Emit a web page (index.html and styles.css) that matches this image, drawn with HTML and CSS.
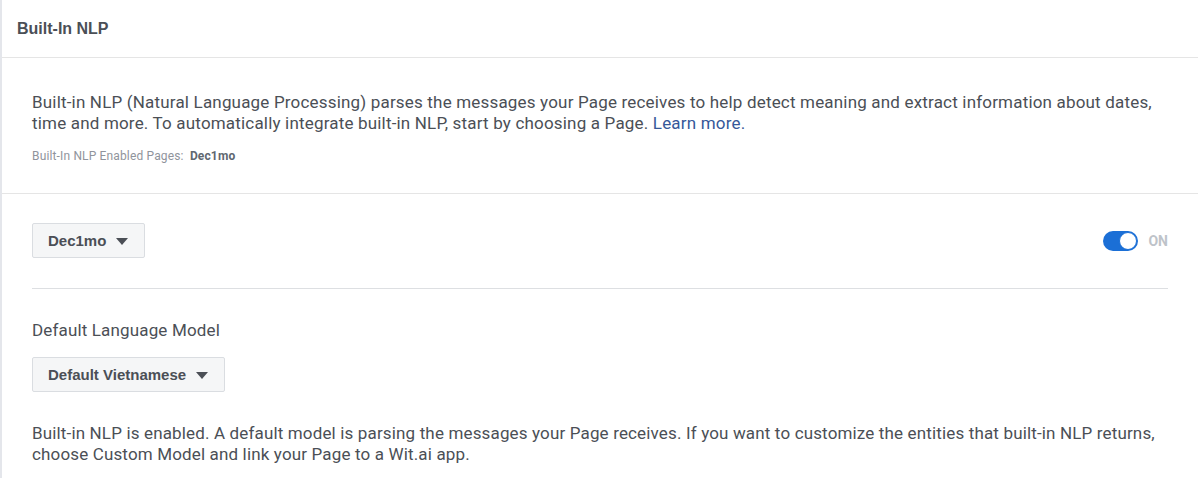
FILE: index.html
```html
<!DOCTYPE html>
<html>
<head>
<meta charset="utf-8">
<link rel="stylesheet" href="styles.css">
</head>
<body>
<div class="panel">
  <div class="header">Built-In NLP</div>
  <div class="intro">
    <p class="desc">Built-in NLP (Natural Language Processing) parses the messages your Page receives to help detect meaning and extract information about dates, time and more. To automatically integrate built-in NLP, start by choosing a Page. <a class="link" href="#">Learn more.</a></p>
    <div class="enabled">Built-In NLP Enabled Pages:&nbsp; <b class="enabled-name">Dec1mo</b></div>
  </div>
  <div class="settings">
    <div class="page-row">
      <button class="dropdown">Dec1mo <span class="caret"></span></button>
      <div class="toggle-wrap">
        <span class="toggle"><span class="knob"></span></span>
        <span class="toggle-label">ON</span>
      </div>
    </div>
    <div class="divider"></div>
    <div class="label">Default Language Model</div>
    <button class="dropdown">Default Vietnamese <span class="caret"></span></button>
    <p class="note">Built-in NLP is enabled. A default model is parsing the messages your Page receives. If you want to customize the entities that built-in NLP returns, choose Custom Model and link your Page to a Wit.ai app.</p>
  </div>
</div>
</body>
</html>
```

FILE: styles.css
```css
html, body {
  margin: 0;
  padding: 0;
  background: #fff;
}
body {
  font-family: Roboto, "Liberation Sans", Arial, sans-serif;
  color: #4b4f56;
}
.panel {
  border-left: 2px solid #e4e6eb;
  min-height: 478px;
  box-sizing: border-box;
}
.header {
  height: 58px;
  box-sizing: border-box;
  border-bottom: 1px solid #e5e5e5;
  padding-left: 15px;
  display: flex;
  align-items: center;
  font-family: "Liberation Sans", Arial, sans-serif;
  font-weight: bold;
  font-size: 16px;
  color: #4b4f56;
}
.intro {
  padding: 34px 32px 29px 30px;
  border-bottom: 1px solid #e5e5e5;
}
.desc {
  margin: 0 0 14px;
  font-size: 17px;
  letter-spacing: 0.18px;
  line-height: 21px;
}
.link {
  color: #365899;
  text-decoration: none;
}
.enabled {
  font-size: 12px;
  letter-spacing: 0.15px;
  line-height: 16px;
  color: #90949c;
}
.enabled-name {
  color: #606770;
  font-weight: bold;
}
.settings {
  padding: 29px 30px 0 30px;
}
.page-row {
  display: flex;
  align-items: center;
  justify-content: space-between;
}
.dropdown {
  display: inline-flex;
  align-items: center;
  height: 35px;
  box-sizing: border-box;
  padding: 0 16px 0 15px;
  background: #f5f6f7;
  border: 1px solid #dadde1;
  border-radius: 2px;
  font-family: "Liberation Sans", Arial, sans-serif;
  font-weight: bold;
  font-size: 15px;
  color: #4b4f56;
  cursor: pointer;
}
.caret {
  display: inline-block;
  width: 0;
  height: 0;
  margin-left: 10px;
  margin-top: 1px;
  border-left: 6px solid transparent;
  border-right: 6px solid transparent;
  border-top: 7px solid #4b4f56;
}
.toggle-wrap {
  display: flex;
  align-items: center;
  gap: 10px;
}
.toggle {
  width: 35px;
  height: 20px;
  box-sizing: border-box;
  border-radius: 10px;
  background: #1b6fd6;
  display: flex;
  align-items: center;
  justify-content: flex-end;
  padding: 1px;
}
.knob {
  width: 18px;
  height: 18px;
  border-radius: 50%;
  background: #fff;
  box-sizing: border-box;
  border: 1px solid #1b6fd6;
}
.toggle-label {
  font-weight: bold;
  font-size: 14px;
  color: #bec3c9;
}
.divider {
  height: 1px;
  background: #dddfe2;
  margin: 30px 0 31px;
}
.label {
  font-size: 17px;
  letter-spacing: 0.15px;
  line-height: 21px;
  margin-bottom: 16px;
}
.note {
  margin: 31px 0 0;
  font-size: 17px;
  letter-spacing: 0.15px;
  line-height: 21px;
}
```
